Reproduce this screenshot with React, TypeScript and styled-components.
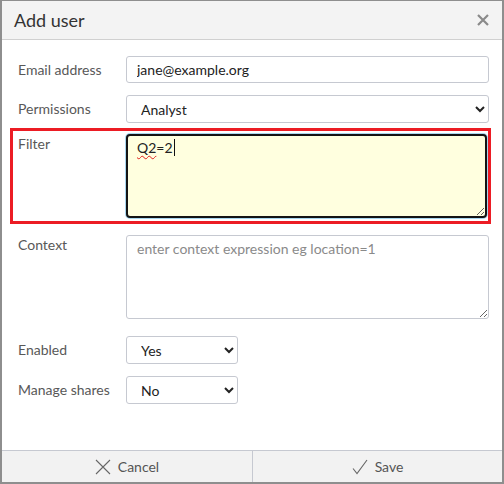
import React from "react";
import styled, { createGlobalStyle } from "styled-components";

const GlobalStyle = createGlobalStyle`
  html, body {
    margin: 0;
    padding: 0;
    background: #ffffff;
  }
  body {
    font-family: Lato, "Open Sans", "Liberation Sans", sans-serif;
  }
`;

const App = () => {
  return (
    <>
      <GlobalStyle />
      <Dialog>
        <Header>
          <Title>Add user</Title>
          <CloseButton aria-label="Close">
            <svg width="12" height="12" viewBox="0 0 12 12">
              <path d="M1 1 L11 11 M11 1 L1 11" stroke="#8a8a8a" strokeWidth="2.2" />
            </svg>
          </CloseButton>
        </Header>
        <Body>
          <Row $top={0}>
            <Label>Email address</Label>
            <TextInput defaultValue="jane@example.org" />
          </Row>
          <Row $top={12}>
            <Label>Permissions</Label>
            <Select defaultValue="Analyst">
              <option>Analyst</option>
              <option>Admin</option>
              <option>Viewer</option>
            </Select>
          </Row>
          <Highlight>
            <Label $pad={0}>Filter</Label>
            <FocusedArea role="textbox">
              <Misspelt>Q2</Misspelt>=2<Caret />
            </FocusedArea>
          </Highlight>
          <Row $top={11}>
            <Label $pad={0}>Context</Label>
            <TextArea placeholder="enter context expression eg location=1" />
          </Row>
          <Row $top={17}>
            <Label>Enabled</Label>
            <Select $small defaultValue="Yes">
              <option>Yes</option>
              <option>No</option>
            </Select>
          </Row>
          <Row $top={12}>
            <Label>Manage shares</Label>
            <Select $small defaultValue="No">
              <option>Yes</option>
              <option>No</option>
            </Select>
          </Row>
        </Body>
        <Footer>
          <FooterButton>
            <svg width="16" height="16" viewBox="0 0 16 16">
              <path d="M1 1 L15 15 M15 1 L1 15" stroke="#666" strokeWidth="1.1" fill="none" />
            </svg>
            Cancel
          </FooterButton>
          <FooterButton>
            <svg width="16" height="16" viewBox="0 0 16 16">
              <path d="M1 9.5 L5 14.5 L15 1" stroke="#666" strokeWidth="1.1" fill="none" />
            </svg>
            Save
          </FooterButton>
        </Footer>
      </Dialog>
    </>
  );
};

const Dialog = styled.div`
  display: flex;
  flex-direction: column;
  width: 504px;
  height: 484px;
  box-sizing: border-box;
  border: 2px solid #8e8e8e;
  border-top-width: 1px;
  background: #ffffff;
  overflow: hidden;
`;

const Header = styled.div`
  display: flex;
  align-items: center;
  justify-content: space-between;
  height: 38px;
  padding: 0 12px;
  background: #f3f3f3;
  border-bottom: 1px solid #d0d0d0;
`;

const Title = styled.h4`
  margin: 0;
  font-size: 18px;
  font-weight: 400;
  color: #333333;
`;

const CloseButton = styled.button`
  display: flex;
  align-items: center;
  border: 0;
  padding: 0 1px;
  background: transparent;
  cursor: pointer;
`;

const Body = styled.div`
  display: flex;
  flex-direction: column;
  padding-top: 16px;
`;

const Row = styled.div<{ $top: number }>`
  display: grid;
  grid-template-columns: 108px 1fr;
  align-items: start;
  margin-top: ${(p) => p.$top}px;
  padding: 0 13px 0 16px;
`;

const Highlight = styled.div`
  display: grid;
  grid-template-columns: 108px 1fr;
  align-items: start;
  margin: 5px 11px 0 8px;
  padding: 3px 1px 3px 5px;
  border: 3px solid #ec1c24;
`;

const Label = styled.label<{ $pad?: number }>`
  padding-top: ${(p) => (p.$pad !== undefined ? p.$pad : 4)}px;
  font-size: 14px;
  line-height: 20px;
  color: #585858;
`;

const fieldBase = `
  box-sizing: border-box;
  font-family: Lato, "Open Sans", "Liberation Sans", sans-serif;
  font-size: 14px;
  color: #222222;
  background: #ffffff;
  border: 1px solid #c6c9d1;
  border-radius: 3px;
  outline: none;
`;

const TextInput = styled.input`
  ${fieldBase}
  width: 100%;
  height: 27px;
  padding: 0 10px;
`;

const Select = styled.select<{ $small?: boolean }>`
  ${fieldBase}
  width: ${(p) => (p.$small ? "112px" : "100%")};
  height: 28px;
  padding: 0 10px;
`;

const FocusedArea = styled.div`
  box-sizing: border-box;
  height: 84px;
  padding: 3px 9px;
  font-size: 14px;
  line-height: 18px;
  color: #222222;
  background: #ffffdf;
  border: 2px solid #141414;
  border-radius: 4px;
  box-shadow: 0 0 0 1px #a9d6ee;
  resize: both;
  overflow: auto;
`;

const Misspelt = styled.span`
  text-decoration: underline wavy #e0201c;
  text-decoration-thickness: 1px;
  text-underline-offset: 2px;
`;

const Caret = styled.span`
  display: inline-block;
  width: 1px;
  height: 17px;
  margin-left: 1px;
  vertical-align: -3px;
  background: #111111;
`;

const TextArea = styled.textarea`
  ${fieldBase}
  display: block;
  width: 100%;
  height: 84px;
  padding: 4px 10px;
  resize: both;
  &::placeholder {
    color: #8a8a8a;
  }
`;

const Footer = styled.div`
  display: grid;
  grid-template-columns: 1fr 1fr;
  margin-top: auto;
  height: 32px;
  box-sizing: border-box;
  border-top: 1px solid #c6c9d1;
  background: #f2f2f2;
`;

const FooterButton = styled.button`
  display: flex;
  align-items: center;
  justify-content: center;
  gap: 7px;
  border: 0;
  background: transparent;
  font-family: Lato, "Open Sans", "Liberation Sans", sans-serif;
  font-size: 14px;
  color: #555555;
  cursor: pointer;
  & + & {
    border-left: 1px solid #c6c9d1;
  }
`;

export default App;
